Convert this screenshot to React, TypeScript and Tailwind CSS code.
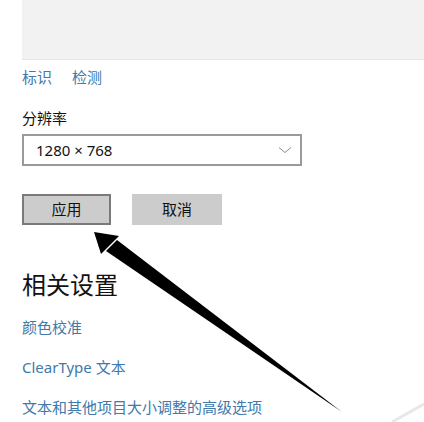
export default function App() {
  const font = { fontFamily: '"Noto Sans", "Noto Sans CJK SC", sans-serif' };

  return (
    <div className="relative w-[424px] h-[422px] overflow-hidden bg-white" style={font}>
      <div className="pl-[22px]">
        {/* top panel */}
        <div className="h-[60px] bg-[#f2f2f2] border-b border-[#e6e6e6]" />

        {/* identify / detect */}
        <div className="mt-[7px] flex gap-[20px] text-[15px] leading-[20px] text-[#4079aa]">
          <span>标识</span>
          <span>检测</span>
        </div>

        <div className="mt-[21px] text-[15px] leading-[20px] text-[#111]">分辨率</div>

        {/* resolution select */}
        <div className="mt-[6px] w-[280px] h-[32px] border-2 border-[#9a9a9a] flex items-center justify-between pl-[12px] pr-[8px]">
          <span className="text-[15px] text-[#111]">1280 × 768</span>
          <svg width="14" height="8" viewBox="0 0 14 8">
            <path d="M1 1.5 L7 6.5 L13 1.5" fill="none" stroke="#8a8a8a" strokeWidth="1" />
          </svg>
        </div>

        {/* buttons */}
        <div className="mt-[28px] flex gap-[21px]">
          <button className="w-[89px] h-[31px] bg-[#cccccc] border-2 border-[#7a7a7a] text-[15px] text-[#111]">
            应用
          </button>
          <button className="w-[90px] h-[31px] bg-[#cccccc] text-[15px] text-[#111]">
            取消
          </button>
        </div>

        {/* related settings */}
        <div className="mt-[44px] text-[24px] leading-[32px] text-[#111]">相关设置</div>
        <div className="mt-[16px] flex flex-col gap-[20px] text-[15px] leading-[20px] text-[#4079aa]">
          <span>颜色校准</span>
          <span>ClearType 文本</span>
          <span>文本和其他项目大小调整的高级选项</span>
        </div>
      </div>

      {/* annotation arrow */}
      <svg className="absolute left-0 top-0 pointer-events-none" width="424" height="422" viewBox="0 0 424 422">
        <polygon points="94,232 119,236 101,254" fill="#000" />
        <polygon points="117,240 342,412 106,251" fill="#000" />
        <path d="M392 422 L424 404" stroke="#e8e8e8" strokeWidth="3" />
      </svg>
    </div>
  );
}
